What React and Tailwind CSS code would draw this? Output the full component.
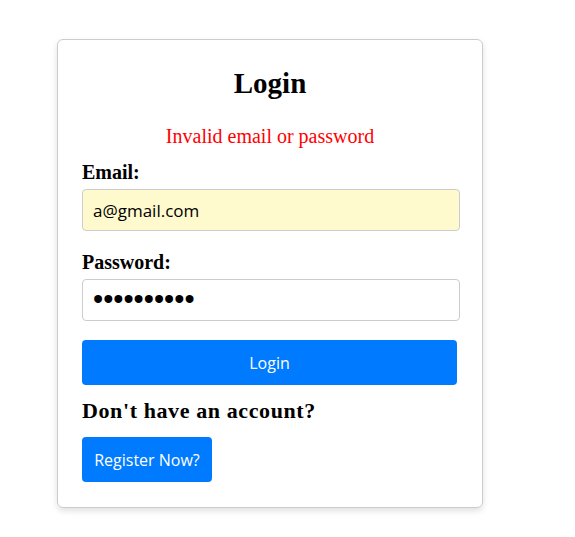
function App() {
  return (
    <div className="w-[575px] h-[537px] bg-white pt-[39px] pl-[57px]" style={{ fontFamily: '"Liberation Serif", serif' }}>
      <div className="w-[426px] h-[469px] border border-[#cccccc] rounded-[6px] shadow-[0_3px_6px_rgba(0,0,0,0.12)] px-[24px] pt-[24px]">
        <h2 className="text-center text-[29px] font-bold leading-[38px] text-black">Login</h2>
        <p className="text-center text-[20px] text-[#ff0000] leading-[24px] mt-[22px]">Invalid email or password</p>
        <form className="mt-[12px]">
          <label className="block text-[20px] font-bold leading-[24px] mb-[5px]">Email:</label>
          <input
            type="email"
            defaultValue="a@gmail.com"
            className="block w-[378px] h-[42px] px-[10px] border border-[#cccccc] rounded-[4px] bg-[#fffacd] text-[17px] text-black outline-none"
            style={{ fontFamily: '"Open Sans", "Liberation Sans", sans-serif' }}
          />
          <label className="block text-[20px] font-bold leading-[24px] mt-[19px] mb-[5px]">Password:</label>
          <input
            type="password"
            defaultValue="abcdefghij"
            className="block w-[378px] h-[42px] px-[10px] border border-[#cccccc] rounded-[4px] bg-white text-[29px] tracking-[0px] text-black outline-none"
            style={{ fontFamily: '"Liberation Sans", sans-serif' }}
          />
          <button
            type="button"
            className="block w-[375px] h-[45px] mt-[19px] bg-[#007bff] text-white text-[16px] rounded-[4px]"
            style={{ fontFamily: '"Open Sans", "Liberation Sans", sans-serif' }}
          >
            Login
          </button>
        </form>
        <h3 className="text-[22px] font-bold leading-[26px] mt-[13px] tracking-[0.6px]">Don't have an account?</h3>
        <button
          type="button"
          className="block w-[130px] h-[45px] mt-[13px] bg-[#007bff] text-white text-[16px] rounded-[4px]"
          style={{ fontFamily: '"Open Sans", "Liberation Sans", sans-serif' }}
        >
          Register Now?
        </button>
      </div>
    </div>
  );
}

export default App;
